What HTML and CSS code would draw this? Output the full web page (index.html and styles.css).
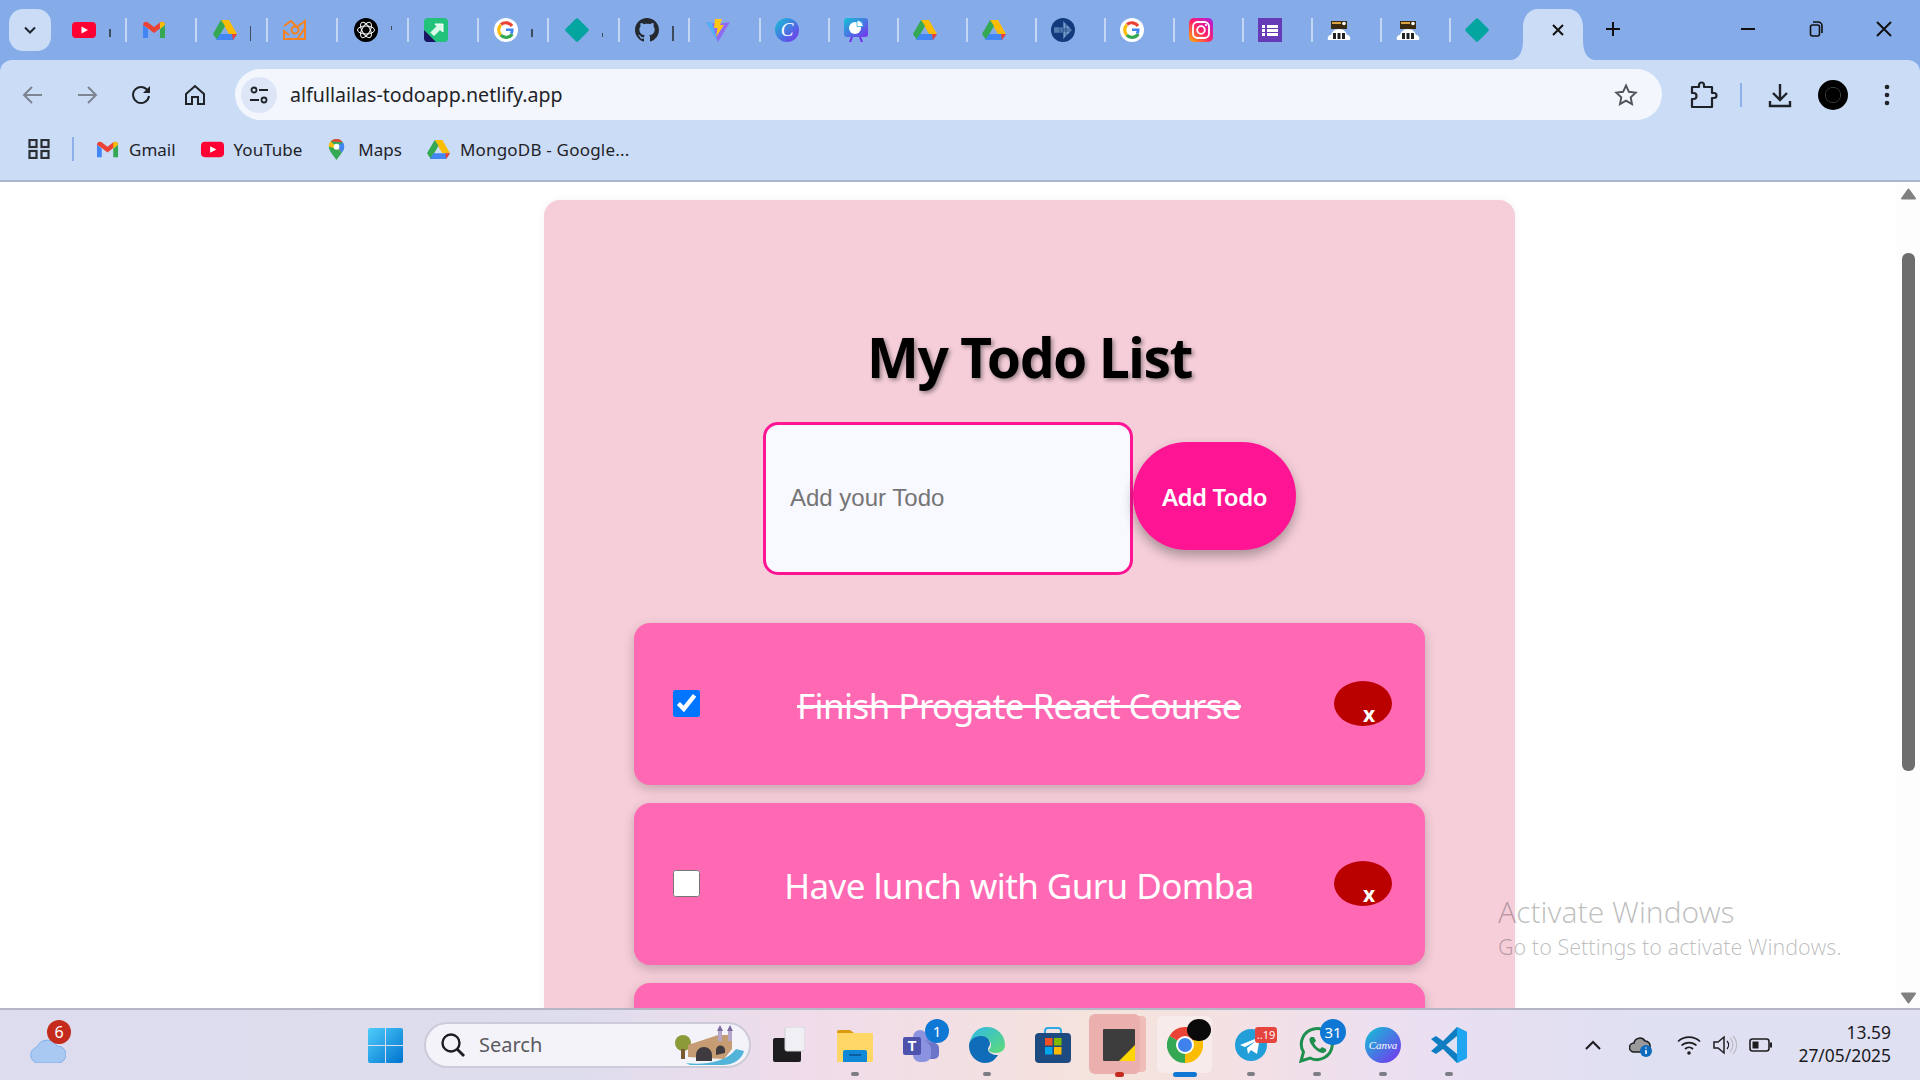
FILE: index.html
```html
<!DOCTYPE html>
<html>
    <head>
        <title>My Todo List</title>
        <link rel="stylesheet" href="styles.css">
    </head>
    <body>
        <svg class="sprite" width="0" height="0">
            <defs>
                <linearGradient id="g-canva" x1="0" y1="0" x2="1" y2="1">
                    <stop offset="0" stop-color="#11c4d4"/>
                    <stop offset="1" stop-color="#7a2ff0"/>
                </linearGradient>
                <linearGradient id="g-insta" x1="0" y1="1" x2="1" y2="0">
                    <stop offset="0" stop-color="#ffb000"/>
                    <stop offset=".5" stop-color="#ff1f6b"/>
                    <stop offset="1" stop-color="#a51fe8"/>
                </linearGradient>
                <linearGradient id="g-win" x1="0" y1="0" x2="1" y2="1">
                    <stop offset="0" stop-color="#4fcdfb"/>
                    <stop offset="1" stop-color="#0073cf"/>
                </linearGradient>
                <linearGradient id="g-edge" x1="0" y1="0" x2="1" y2="1">
                    <stop offset="0" stop-color="#2fb7e8"/>
                    <stop offset="1" stop-color="#5fdc76"/>
                </linearGradient>
                <symbol id="i-youtube" viewBox="0 0 24 24">
                    <rect x="0" y="4" width="24" height="16" rx="4" fill="#ff0033"/>
                    <path d="M9.500 8.500 16 12l-6.500 3.500z" fill="#fff"/>
                </symbol>
                <symbol id="i-gmail" viewBox="0 0 24 24">
                    <path d="M1 7v13h5V11z" fill="#4285f4"/>
                    <path d="M18 11v9h5V7z" fill="#34a853"/>
                    <path d="M1 7c0-3 3-4 5-2.500l6 4.500 6-4.500c2-1.500 5-.5 5 2l-5 4-6 4.500-6-4.500z" fill="#ea4335"/>
                    <path d="M18 4.500c2-1.500 5-.5 5 2.500l-5 4z" fill="#fbbc04"/>
                </symbol>
                <symbol id="i-drive" viewBox="0 0 24 24">
                    <path d="M8 2h8l8 14h-8z" fill="#fbbc04"/>
                    <path d="M8 2 0 16l4 6 8-14z" fill="#34a853"/>
                    <path d="M7 16h17l-4 6H3z" fill="#4285f4"/>
                    <path d="M20 22l4-6h-5z" fill="#ea4335"/>
                </symbol>
                <symbol id="i-google" viewBox="0 0 24 24">
                    <circle cx="12" cy="12" r="12" fill="#fff"/>
                    <path d="M18 8a7.500 7.500 0 0 0-11-1.500" fill="none" stroke="#ea4335" stroke-width="3.200"/>
                    <path d="M6.800 6.800a7.500 7.500 0 0 0 0 10.400" fill="none" stroke="#fbbc04" stroke-width="3.200"/>
                    <path d="M6.800 17.200a7.500 7.500 0 0 0 11.500-1.200" fill="none" stroke="#34a853" stroke-width="3.200"/>
                    <path d="M12 10.500h7.500c.3 2.500-.2 4.500-1.200 5.800l-2.500-1.800c.5-.5.800-1 .9-1.500H12z" fill="#4285f4"/>
                </symbol>
                <symbol id="i-diamond" viewBox="0 0 24 24">
                    <path d="M10.500 1 1 10.500a2 2 0 0 0 0 3L10.500 23a2 2 0 0 0 3 0l9.500-9.500a2 2 0 0 0 0-3L13.500 1a2 2 0 0 0-3 0z" fill="#04a5a0"/>
                </symbol>
                <symbol id="i-dom" viewBox="0 0 24 24">
                    <rect x="4" y="3" width="16" height="8" fill="#3a2a10"/>
                    <rect x="5" y="4" width="9" height="2" fill="#d9a441"/>
                    <circle cx="17" cy="5.500" r="1.800" fill="#fff"/>
                    <path d="M1 22c-1-3 1-5 3-5 1-3 3-6 8-6s7 3 8 6c2 0 4 2 3 5z" fill="#fff"/>
                    <rect x="6" y="15" width="3" height="6" fill="#222"/>
                    <rect x="10.500" y="15" width="3" height="6" fill="#222"/>
                    <rect x="15" y="15" width="3" height="6" fill="#222"/>
                </symbol>
                <symbol id="i-dot" viewBox="0 0 8 4">
                    <rect width="8" height="4" rx="2" fill="#7d7d85"/>
                </symbol>
            </defs>
        </svg>

        <div class="chrome">
            <div class="tabstrip">
                <button class="tab-search">
                    <svg width="16" height="16" viewBox="0 0 16 16"><path d="M3 5.500 8 10.500l5-5" fill="none" stroke="#1f2430" stroke-width="2"/></svg>
                </button>
                <div class="tabs">
                    <div class="tab tab-wide"><svg class="favicon"><use href="#i-youtube"/></svg><span class="sliver"></span></div>
                    <div class="tab tab-wide"><svg class="favicon"><use href="#i-gmail"/></svg></div>
                    <div class="tab tab-wide"><svg class="favicon"><use href="#i-drive"/></svg><span class="sliver sliver-tall"></span></div>
                    <div class="tab tab-wide">
                        <svg class="favicon" viewBox="0 0 24 24"><g fill="none" stroke="#f58220" stroke-width="2"><path d="M1 8 8 3l6 6 8-6v18H9L1 21v-8l5 4"/><circle cx="12" cy="12" r="3.500"/><path d="M22 10l-7 10"/></g></svg>
                    </div>
                    <div class="tab tab-wide">
                        <svg class="favicon" viewBox="0 0 24 24"><circle cx="12" cy="12" r="12" fill="#000"/><g fill="none" stroke="#fff" stroke-width="1"><ellipse cx="12" cy="12" rx="8.500" ry="4"/><ellipse cx="12" cy="12" rx="8.500" ry="4" transform="rotate(60 12 12)"/><ellipse cx="12" cy="12" rx="8.500" ry="4" transform="rotate(120 12 12)"/></g></svg>
                        <span class="sliver sliver-top"></span>
                    </div>
                    <div class="tab tab-wide">
                        <svg class="favicon" viewBox="0 0 24 24"><rect width="24" height="24" rx="4" fill="#22c27a"/><path d="M0 12 12 24H4a4 4 0 0 1-4-4z" fill="#1c1464"/><path d="M11 6h8v8l-3-2.500-6 6-3-3 6-6z" fill="#d8fbe9" stroke="#fff"/></svg>
                    </div>
                    <div class="tab tab-wide"><svg class="favicon"><use href="#i-google"/></svg><span class="sliver"></span></div>
                    <div class="tab tab-wide"><svg class="favicon"><use href="#i-diamond"/></svg><span class="sliver sliver-low"></span></div>
                    <div class="tab tab-wide">
                        <svg class="favicon" viewBox="0 0 16 16"><path fill="#24292f" d="M8 0C3.580 0 0 3.580 0 8c0 3.540 2.290 6.530 5.470 7.590.4.070.55-.17.55-.38 0-.19-.01-.82-.01-1.490-2.010.37-2.530-.49-2.690-.94-.09-.23-.48-.94-.82-1.130-.28-.15-.68-.52-.01-.53.63-.01 1.080.58 1.230.82.72 1.210 1.870.87 2.330.66.07-.52.28-.87.51-1.070-1.780-.2-3.640-.89-3.640-3.950 0-.87.31-1.590.82-2.150-.08-.2-.36-1.020.08-2.120 0 0 .67-.21 2.200.82.64-.18 1.320-.27 2-.27.68 0 1.360.09 2 .27 1.530-1.040 2.200-.82 2.200-.82.44 1.100.16 1.920.08 2.120.51.56.82 1.270.82 2.150 0 3.070-1.870 3.750-3.650 3.950.29.25.54.73.54 1.480 0 1.070-.01 1.930-.01 2.200 0 .21.15.46.55.38A8.013 8.013 0 0 0 16 8c0-4.420-3.580-8-8-8z"/></svg>
                        <span class="sliver sliver-tall"></span>
                    </div>
                    <div class="tab tab-wide">
                        <svg class="favicon" viewBox="0 0 24 24"><path d="M0 4l12 2 12-2-12 20z" fill="#8f6bf5"/><path d="M0 4l6 1 6 19z" fill="#4fb4f5"/><path d="M9 1h7l-2 6h4L10 19l1.500-9H8z" fill="#ffc517"/></svg>
                    </div>
                    <div class="tab">
                        <svg class="favicon" viewBox="0 0 24 24"><circle cx="12" cy="12" r="12" fill="url(#g-canva)"/><text x="12" y="18" class="canva-c">C</text></svg>
                    </div>
                    <div class="tab">
                        <svg class="favicon" viewBox="0 0 24 24"><rect width="24" height="19" rx="3" fill="url(#g-canva)"/><path d="M8 19l-2 5M16 19l2 5" stroke="#6a2fe0" stroke-width="2"/><circle cx="11" cy="10" r="6" fill="#fff"/><path d="M13 2.500h1a6 6 0 0 1 5 5v1h-6z" fill="#fff" stroke="#14a5d8" stroke-width=".7"/></svg>
                    </div>
                    <div class="tab"><svg class="favicon"><use href="#i-drive"/></svg></div>
                    <div class="tab"><svg class="favicon"><use href="#i-drive"/></svg></div>
                    <div class="tab">
                        <svg class="favicon" viewBox="0 0 24 24"><circle cx="12" cy="12" r="12" fill="#133a7c"/><path d="M12 3l9 9-9 9zM3 9.500h12v5H3z" fill="#9cc0e8" opacity=".75"/><path d="M3 11h18M3 13h18M9 6v12M12 4v16M15 6v12" stroke="#133a7c" stroke-width=".7"/></svg>
                    </div>
                    <div class="tab"><svg class="favicon"><use href="#i-google"/></svg></div>
                    <div class="tab">
                        <svg class="favicon" viewBox="0 0 24 24"><rect width="24" height="24" rx="5" fill="url(#g-insta)"/><rect x="4" y="4" width="16" height="16" rx="4.500" fill="none" stroke="#fff" stroke-width="1.800"/><circle cx="12" cy="12" r="3.800" fill="none" stroke="#fff" stroke-width="1.800"/><circle cx="17" cy="7" r="1.100" fill="#fff"/></svg>
                    </div>
                    <div class="tab">
                        <svg class="favicon" viewBox="0 0 24 24"><rect width="24" height="24" fill="#673ab7"/><path d="M9 7h11v3H9zM9 11h11v3H9zM9 15h11v3H9zM4 7h3v3H4zM4 11h3v3H4zM4 15h3v3H4z" fill="#fff"/></svg>
                    </div>
                    <div class="tab"><svg class="favicon"><use href="#i-dom"/></svg></div>
                    <div class="tab"><svg class="favicon"><use href="#i-dom"/></svg></div>
                    <div class="tab tab-last"><svg class="favicon"><use href="#i-diamond"/></svg></div>
                </div>
                <svg class="active-tab" width="86" height="51" viewBox="0 0 86 51">
                    <path d="M0 51c9 0 13-8 13-20V18C13 8 19 0 28 0h30c9 0 15 8 15 18v13c0 12 4 20 13 20z" fill="#cbdcf6"/>
                    <path d="M43 16l10 10M53 16 43 26" stroke="#111" stroke-width="2"/>
                </svg>
                <svg class="new-tab" width="16" height="16" viewBox="0 0 16 16"><path d="M8 1v14M1 8h14" stroke="#111" stroke-width="2"/></svg>
                <div class="window-controls">
                    <svg width="68" height="20" viewBox="0 0 68 20"><path d="M27 10h14" stroke="#111" stroke-width="2"/></svg>
                    <svg width="68" height="20" viewBox="0 0 68 20"><g fill="none" stroke="#111" stroke-width="1.600"><rect x="28.500" y="6" width="9" height="11" rx="2"/><path d="M31 3h5a4 4 0 0 1 4 4v7"/></g></svg>
                    <svg width="68" height="20" viewBox="0 0 68 20"><path d="M27 3l14 14M41 3 27 17" stroke="#111" stroke-width="2"/></svg>
                </div>
            </div>

            <div class="toolbar">
                <span class="tool">
                    <svg width="22" height="22" viewBox="0 0 22 22"><path d="M20 11H3M10 3l-8 8 8 8" fill="none" stroke="#7c8590" stroke-width="2"/></svg>
                </span>
                <span class="tool">
                    <svg width="22" height="22" viewBox="0 0 22 22"><path d="M2 11h17M12 3l8 8-8 8" fill="none" stroke="#7c8590" stroke-width="2"/></svg>
                </span>
                <span class="tool">
                    <svg width="22" height="22" viewBox="0 0 22 22"><path d="M18.500 8A8 8 0 1 0 19 12" fill="none" stroke="#1f2328" stroke-width="2"/><path d="M20 2v7h-7z" fill="#1f2328"/></svg>
                </span>
                <span class="tool">
                    <svg width="22" height="22" viewBox="0 0 22 22"><path d="M2 10 11 2l9 8v10h-6v-7H8v7H2z" fill="none" stroke="#1f2328" stroke-width="2"/></svg>
                </span>
                <div class="omnibox">
                    <span class="site-info">
                        <svg width="20" height="20" viewBox="0 0 20 20"><g fill="none" stroke="#1f2328" stroke-width="1.800"><circle cx="5" cy="5" r="2.500"/><path d="M10 5h9M1 15h9"/><circle cx="15" cy="15" r="2.500"/></g></svg>
                    </span>
                    <span class="url">alfullailas-todoapp.netlify.app</span>
                    <svg class="star" width="24" height="24" viewBox="0 0 24 24"><path d="M12 2.500l2.900 6.300 6.800.8-5 4.700 1.300 6.800-6-3.400-6 3.400 1.300-6.800-5-4.700 6.800-.8z" fill="none" stroke="#50545a" stroke-width="1.900"/></svg>
                </div>
                <svg class="tool-extensions" width="30" height="30" viewBox="0 0 30 30"><path d="M4 7h7V5a2.500 2.500 0 0 1 5 0v2h8v6h2a2.500 2.500 0 0 1 0 5h-2v9H4v-8h1.500a3 3 0 0 0 0-6H4z" fill="none" stroke="#1f2328" stroke-width="2.200" stroke-linejoin="round"/></svg>
                <span class="tool-sep"></span>
                <svg class="tool-download" width="30" height="30" viewBox="0 0 30 30"><path d="M15 4v15M8 13l7 7 7-7M5 21v5h20v-5" fill="none" stroke="#1f2328" stroke-width="2.400"/></svg>
                <span class="avatar"></span>
                <svg class="tool-menu" width="30" height="30" viewBox="0 0 30 30"><circle cx="15" cy="7" r="2.300" fill="#1f2328"/><circle cx="15" cy="15" r="2.300" fill="#1f2328"/><circle cx="15" cy="23" r="2.300" fill="#1f2328"/></svg>
            </div>

            <div class="bookmarks">
                <svg class="apps" width="22" height="20" viewBox="0 0 22 20"><g fill="none" stroke="#2b2f33" stroke-width="2.200"><rect x="1.500" y="1" width="7" height="7"/><rect x="13.500" y="1" width="7" height="7"/><rect x="1.500" y="12" width="7" height="7"/><rect x="13.500" y="12" width="7" height="7"/></g></svg>
                <span class="bookmark-sep"></span>
                <span class="bookmark bookmark-gmail"><svg class="bookmark-icon"><use href="#i-gmail"/></svg>Gmail</span>
                <span class="bookmark bookmark-youtube"><svg class="bookmark-icon"><use href="#i-youtube"/></svg>YouTube</span>
                <span class="bookmark bookmark-maps">
                    <svg class="bookmark-icon" viewBox="0 0 24 24"><path d="M12 23C8 17 4 13 4 9a8 8 0 0 1 16 0c0 4-4 8-8 14z" fill="#34a853"/><path d="M6 3.500 17.500 15 12 11 4 9a8 8 0 0 1 2-5.500z" fill="#fbbc04"/><path d="M12 1a8 8 0 0 1 6.500 3.500L6 3.500A8 8 0 0 1 12 1z" fill="#ea4335"/><path d="M18.500 4.500A8 8 0 0 1 17.500 15L12 9z" fill="#4285f4"/><circle cx="12" cy="9" r="3" fill="#fff"/></svg>
                    Maps
                </span>
                <span class="bookmark bookmark-drive"><svg class="bookmark-icon"><use href="#i-drive"/></svg>MongoDB - Google...</span>
            </div>
        </div>

        <div class="viewport">
            <div class="page">
                <div class="card">
                    <h1 class="title">My Todo List</h1>
                    <form class="todo-form">
                        <input class="todo-input" type="text" placeholder="Add your Todo">
                        <button class="add-btn" type="button">Add Todo</button>
                    </form>
                    <div class="todo-list">
                        <div class="todo-item">
                            <input class="todo-check" type="checkbox" checked>
                            <span class="todo-text done">Finish Progate React Course</span>
                            <button class="delete-btn" type="button">x</button>
                        </div>
                        <div class="todo-item">
                            <input class="todo-check" type="checkbox">
                            <span class="todo-text">Have lunch with Guru Domba</span>
                            <button class="delete-btn" type="button">x</button>
                        </div>
                        <div class="todo-item"></div>
                    </div>
                </div>
            </div>
            <div class="scrollbar">
                <svg class="arrow-up" width="15" height="12" viewBox="0 0 15 12"><path d="M7.500 1.500 14 10.500H1z" fill="#808080" stroke="#808080" stroke-width="2" stroke-linejoin="round"/></svg>
                <div class="thumb"></div>
                <svg class="arrow-down" width="15" height="12" viewBox="0 0 15 12"><path d="M7.500 10.500 14 1.500H1z" fill="#808080" stroke="#808080" stroke-width="2" stroke-linejoin="round"/></svg>
            </div>
            <div class="activate">
                <div class="activate-title">Activate Windows</div>
                <div class="activate-sub">Go to Settings to activate Windows.</div>
            </div>
        </div>

        <div class="taskbar">
            <div class="weather">
                <svg class="weather-sun" width="10" height="10" viewBox="0 0 10 10"><circle cx="5" cy="5" r="5" fill="#f08a24"/></svg>
                <svg class="weather-cloud" width="36" height="24" viewBox="0 0 36 24"><path d="M8 24a8 8 0 0 1-1-15.800A11 11 0 0 1 27 7a8.500 8.500 0 0 1 1 17z" fill="#a9c8f2" stroke="#7fb0ea"/></svg>
                <span class="weather-badge">6</span>
            </div>
            <svg class="win-logo" width="35" height="35" viewBox="0 0 35 35"><path d="M0 2a2 2 0 0 1 2-2h15v17H0zM18 0h15a2 2 0 0 1 2 2v15H18zM0 18h17v17H2a2 2 0 0 1-2-2zM18 18h17v15a2 2 0 0 1-2 2H18z" fill="url(#g-win)"/></svg>
            <div class="search">
                <svg width="26" height="26" viewBox="0 0 26 26"><circle cx="11" cy="11" r="8.500" fill="none" stroke="#1d1d1f" stroke-width="2.400"/><path d="M17 17l7 7" stroke="#1d1d1f" stroke-width="2.800"/></svg>
                <span class="search-text">Search</span>
                <svg class="search-art" width="74" height="40" viewBox="0 0 74 40">
                    <circle cx="9" cy="18" r="8" fill="#8c9a3a"/><rect x="7" y="24" width="4" height="10" fill="#7a5a35"/>
                    <path d="M14 32V20l30-10 14 0v14l-8 10z" fill="#c59c74"/>
                    <path d="M22 36V30a8 8 0 0 1 16 0v6zM42 30v-5a4 4 0 0 1 9 0v3z" fill="#3f3a3d"/>
                    <rect x="44" y="6" width="4" height="10" fill="#b8a6c8"/><rect x="54" y="6" width="4" height="10" fill="#b8a6c8"/>
                    <path d="M46 0l3 6h-6zM56 0l3 6h-6z" fill="#7a6aa0"/>
                    <path d="M12 38c16 2 40 0 50-14l8 2c-2 8-10 14-22 14H16z" fill="#52b4d8"/>
                </svg>
            </div>
            <div class="apps-row">
                <div class="slot">
                    <svg width="32" height="36" viewBox="0 0 32 36"><rect x="0" y="11" width="28" height="24" rx="2" fill="#1d1d1f"/><rect x="12" y="0" width="20" height="24" rx="2" fill="#f0f0f4" stroke="#d0d0d6"/></svg>
                </div>
                <div class="slot">
                    <svg width="36" height="34" viewBox="0 0 36 34"><path d="M0 4a2 2 0 0 1 2-2h11l4 3h-17z" fill="#d99a10"/><rect y="5" width="36" height="29" rx="1" fill="#ffd767"/><path d="M6 34V24a2 2 0 0 1 2-2h20a2 2 0 0 1 2 2v10z" fill="#0f88d8"/><rect x="12" y="26" width="12" height="2" fill="#0a5ea0"/></svg>
                    <svg class="slot-dot" width="8" height="4"><use href="#i-dot"/></svg>
                </div>
                <div class="slot">
                    <svg width="36" height="34" viewBox="0 0 36 34"><circle cx="26" cy="13" r="7" fill="#7b83d4"/><rect x="20" y="15" width="16" height="16" rx="5" fill="#6d75c8"/><circle cx="17" cy="9" r="7" fill="#8b93e0"/><rect x="10" y="14" width="18" height="20" rx="7" fill="#8b93e0"/><rect y="9" width="18" height="18" rx="2" fill="#4d53ad"/><text x="9" y="23" class="teams-t">T</text></svg>
                    <span class="badge badge-blue">1</span>
                </div>
                <div class="slot">
                    <svg width="36" height="36" viewBox="0 0 36 36"><path d="M18 0a18 18 0 0 1 18 18c0 5-4 8-9 8-4 0-7-1-7-3 0-1 2-2 2-5 0-5-5-8-9-8-6 0-11 4-13 9C1 8 8 0 18 0z" fill="url(#g-edge)"/><path d="M0 19c0-6 6-10 12-10 5 0 9 3 9 8 0 2-2 3-2 5 0 4 5 6 10 6-3 5-7 8-13 8C8 36 0 29 0 19z" fill="#0f6cb8"/></svg>
                    <svg class="slot-dot" width="8" height="4"><use href="#i-dot"/></svg>
                </div>
                <div class="slot">
                    <svg width="36" height="36" viewBox="0 0 36 36"><path d="M10 8V4a3 3 0 0 1 3-3h10a3 3 0 0 1 3 3v4" fill="none" stroke="#2ea8e6" stroke-width="2"/><rect y="6" width="36" height="30" rx="4" fill="#1d4a80"/><rect x="10" y="11" width="7.500" height="7.500" fill="#f25022"/><rect x="19" y="11" width="7.500" height="7.500" fill="#7fba00"/><rect x="10" y="20" width="7.500" height="7.500" fill="#00a4ef"/><rect x="19" y="20" width="7.500" height="7.500" fill="#ffb900"/></svg>
                </div>
                <div class="slot">
                    <span class="tile tile-sticky"></span>
                    <svg class="slot-icon" width="32" height="32" viewBox="0 0 32 32"><rect width="32" height="32" rx="1" fill="#3d3d3d"/><path d="M32 16v16H16z" fill="#ffd500"/></svg>
                    <span class="slot-mark slot-mark-red"></span>
                </div>
                <div class="slot">
                    <span class="tile tile-chrome"></span>
                    <svg class="slot-icon" width="36" height="36" viewBox="0 0 36 36"><path d="M18 18 2.400 9A18 18 0 0 1 33.600 9z" fill="#ea4335"/><path d="M18 18 2.400 9A18 18 0 0 0 18 36z" fill="#34a853"/><path d="M18 18 33.600 9A18 18 0 0 1 18 36z" fill="#fbbc04"/><circle cx="18" cy="18" r="9" fill="#fff"/><circle cx="18" cy="18" r="7" fill="#3f82ee"/></svg>
                    <span class="chrome-avatar"></span>
                    <span class="slot-mark slot-mark-blue"></span>
                </div>
                <div class="slot">
                    <svg width="32" height="32" viewBox="0 0 32 32"><circle cx="16" cy="16" r="16" fill="#229ed9"/><path d="M5 16 25 8l-3 17-6-4-3 4-1-6 9-7-11 6z" fill="#fff"/></svg>
                    <span class="badge-red">..19</span>
                    <svg class="slot-dot" width="8" height="4"><use href="#i-dot"/></svg>
                </div>
                <div class="slot">
                    <svg width="36" height="36" viewBox="0 0 36 36"><path d="M2 34l2.500-9A15.500 15.500 0 1 1 11 31z" fill="none" stroke="#1f8f4f" stroke-width="3"/><path d="M12 10c-2 1-2 4 0 7 3 5 7 8 11 9 3 0 5-2 4-4l-4-2-2 2c-3-1-5-4-6-6l2-2-2-4z" fill="#1f8f4f"/></svg>
                    <span class="badge badge-blue badge-wide">31</span>
                    <svg class="slot-dot" width="8" height="4"><use href="#i-dot"/></svg>
                </div>
                <div class="slot">
                    <svg width="36" height="36" viewBox="0 0 36 36"><circle cx="18" cy="18" r="18" fill="url(#g-canva)"/><text x="18" y="22" class="canva-word">Canva</text></svg>
                    <svg class="slot-dot" width="8" height="4"><use href="#i-dot"/></svg>
                </div>
                <div class="slot">
                    <svg width="36" height="36" viewBox="0 0 36 36"><path d="M26 0 36 5v26l-10 5-14-14-7 5-5-3 7-6-7-6 5-3 7 5z" fill="#0f7dc2"/><path d="M26 0 36 5v26l-10 5z" fill="#20a5f0"/><path d="M26 9 15 18l11 9z" fill="#dfe0f2"/></svg>
                    <svg class="slot-dot" width="8" height="4"><use href="#i-dot"/></svg>
                </div>
            </div>
            <div class="tray">
                <svg width="24" height="24" viewBox="0 0 24 24"><path d="M5 16l7-7 7 7" fill="none" stroke="#1d1d1f" stroke-width="2"/></svg>
                <svg class="tray-wide" width="24" height="24" viewBox="0 0 24 24"><path d="M5 19a4.500 4.500 0 0 1 0-9 6 6 0 0 1 11-2 5 5 0 0 1 5 6v5z" fill="#9a9a9c" stroke="#1d1d1f" stroke-width="1.500"/><circle cx="17" cy="18" r="6" fill="#0f6cbd"/><path d="M17 14.500v1M17 17v4" stroke="#fff" stroke-width="1.600"/></svg>
                <svg class="tray-wide" width="24" height="24" viewBox="0 0 24 24"><g fill="none" stroke="#1d1d1f" stroke-width="1.700"><path d="M1 8.500a16 16 0 0 1 22 0M4.500 12.500a11 11 0 0 1 15 0M8 16a6 6 0 0 1 8 0"/></g><circle cx="12" cy="20" r="1.800" fill="#1d1d1f"/></svg>
                <svg width="24" height="24" viewBox="0 0 24 24"><path d="M1 9h4l6-5v16l-6-5H1z" fill="none" stroke="#1d1d1f" stroke-width="1.500"/><path d="M14 8a6 6 0 0 1 0 8" fill="none" stroke="#1d1d1f" stroke-width="1.300"/><path d="M17 5a10 10 0 0 1 0 14M20 3a13 13 0 0 1 0 18" fill="none" stroke="#bcbcc4" stroke-width="1.300"/></svg>
                <svg width="24" height="24" viewBox="0 0 24 24"><rect x="1" y="6" width="19" height="12" rx="2.500" fill="none" stroke="#1d1d1f" stroke-width="1.600"/><rect x="3.500" y="8.500" width="6" height="7" fill="#1d1d1f"/><path d="M21 9.500h2v5h-2z" fill="#1d1d1f"/></svg>
            </div>
            <div class="clock">
                <div>13.59</div>
                <div>27/05/2025</div>
            </div>
        </div>
    </body>
</html>
```

FILE: styles.css
```css
* {
    box-sizing: border-box;
}
html,
body {
    margin: 0;
    height: 100%;
}
body {
    display: flex;
    flex-direction: column;
    overflow: hidden;
    background: white;
    font-family: "Noto Sans", "Open Sans", sans-serif;
}
svg {
    flex: none;
    display: block;
}
.sprite {
    height: 0;
}

/* browser chrome */
.chrome {
    height: 182px;
    flex: none;
    background: #85ace9;
}
.tabstrip {
    height: 60px;
    display: flex;
    align-items: flex-start;
    padding: 9px 0 0 9px;
}
.tab-search {
    width: 42px;
    height: 42px;
    padding: 0;
    border: 0;
    border-radius: 14px;
    background: #cbdcf6;
    display: flex;
    align-items: center;
    justify-content: center;
}
.tabs {
    display: flex;
    margin: 9px 0 0 5.6px;
}
.tab {
    width: 69.1px;
    height: 24px;
    padding-left: 14px;
    display: flex;
    border-right: 2.5px solid #c4d6f3;
}
.tab-wide {
    width: 70.4px;
    padding-left: 15.5px;
}
.tab-last {
    width: 58.7px;
    border-right: 0;
}
.favicon {
    width: 24px;
    height: 24px;
}
.sliver {
    width: 1.5px;
    height: 8px;
    margin: 11px 0 0 13px;
    background: #3f4a5c;
}
.sliver-tall {
    height: 15px;
    margin-top: 8px;
}
.sliver-top {
    height: 4px;
    margin-top: 8px;
}
.sliver-low {
    height: 4px;
    margin-top: 15px;
}
.new-tab {
    margin: 12px 0 0 9px;
}
.window-controls {
    margin: 10px 0 0 auto;
    display: flex;
    width: 206px;
}

.toolbar {
    height: 66px;
    padding: 3px 0 0 6px;
    display: flex;
    align-items: center;
    background: #cbdcf6;
    border-radius: 12px 12px 0 0;
}
.tool {
    width: 54px;
    display: flex;
    justify-content: center;
}
.omnibox {
    width: 1427px;
    height: 51px;
    margin-left: 13px;
    padding: 0 24px 0 6px;
    display: flex;
    align-items: center;
    background: #f3f7fd;
    border-radius: 26px;
}
.site-info {
    width: 36px;
    height: 36px;
    border-radius: 50%;
    background: #dce6f7;
    display: flex;
    align-items: center;
    justify-content: center;
}
.url {
    margin-left: 13px;
    font-size: 19.6px;
    color: #1f2328;
}
.star {
    margin-left: auto;
}
.tool-extensions {
    margin-left: 26px;
}
.tool-sep {
    width: 2px;
    height: 24px;
    margin-left: 22px;
    background: #8db0e8;
}
.tool-download {
    margin-left: 23px;
}
.avatar {
    width: 30px;
    height: 30px;
    margin-left: 23px;
    border-radius: 50%;
    background: radial-gradient(circle, #000 7px, #3c3c3c 7.5px, #000 8.5px);
}
.tool-menu {
    margin-left: 24px;
}

.bookmarks {
    height: 56px;
    padding: 0 0 8px 28px;
    display: flex;
    align-items: center;
    background: #cbdcf6;
    border-bottom: 2px solid #a9b6cc;
}
.bookmark-sep {
    width: 2px;
    height: 24px;
    margin-left: 22px;
    background: #8db0e8;
}
.bookmark {
    display: flex;
    align-items: center;
    gap: 10px;
    font-size: 17px;
    color: #1f2328;
}
.bookmark-gmail {
    margin-left: 22px;
}
.bookmark-youtube {
    margin-left: 25px;
}
.bookmark-maps {
    margin-left: 23px;
}
.bookmark-drive {
    margin-left: 25px;
    letter-spacing: 0.2px;
}
.bookmark-icon {
    width: 23px;
    height: 23px;
}

/* page */
.viewport {
    flex: 1;
    min-height: 0;
    display: flex;
    position: relative;
}
.page {
    flex: 1;
    overflow: hidden;
    padding: 18px 0 0 544px;
}
.card {
    width: 971px;
    height: 1100px;
    padding: 0 90px;
    background: #f5ced9;
    border-radius: 16px;
    box-shadow: 0 0 8px rgba(0, 0, 0, 0.05);
}
.title {
    margin: 0;
    padding-top: 119px;
    height: 222px;
    text-align: center;
    font-size: 55px;
    line-height: 76px;
    font-weight: 700;
    letter-spacing: -1.4px;
    color: #000;
    text-shadow: 2px 2px 4px rgba(0, 0, 0, 0.4);
}
.todo-form {
    display: flex;
    align-items: center;
    justify-content: center;
}
.todo-input {
    width: 370px;
    height: 153px;
    padding: 0 24px 2px;
    border: 3px solid #ff1493;
    border-radius: 15px;
    background: #f8f8ff;
    font-family: "Liberation Sans", sans-serif;
    font-size: 24px;
}
.add-btn {
    width: 163px;
    height: 108px;
    margin-bottom: 6px;
    padding: 2px 0 0;
    border: 0;
    border-radius: 54px;
    background: #ff1493;
    color: white;
    font-family: inherit;
    font-size: 24px;
    font-weight: 600;
    letter-spacing: -0.5px;
    box-shadow: 0 6px 12px rgba(0, 0, 0, 0.3);
}
.todo-list {
    margin-top: 48px;
    display: flex;
    flex-direction: column;
    gap: 18px;
}
.todo-item {
    height: 162px;
    flex: none;
    padding: 0 33px 2px 39px;
    display: flex;
    align-items: center;
    background: #ff69b4;
    border-radius: 16px;
    box-shadow: 0 4px 12px rgba(0, 0, 0, 0.2);
}
.todo-check {
    width: 27px;
    height: 27px;
    margin: 0;
    flex: none;
}
.todo-text {
    flex: 1;
    margin-top: 4px;
    padding-left: 4px;
    text-align: center;
    font-size: 35px;
    font-weight: 400;
    letter-spacing: -0.58px;
    color: white;
}
.done {
    text-decoration: line-through;
}
.delete-btn {
    width: 58px;
    height: 45px;
    padding: 22px 0 0 12px;
    border: 0;
    border-radius: 50%;
    background: #bb0000;
    color: white;
    font-family: inherit;
    font-size: 21px;
    font-weight: 700;
    line-height: 20px;
}

.scrollbar {
    width: 23px;
    flex: none;
    display: flex;
    flex-direction: column;
    align-items: center;
    background: #fdfdfd;
}
.arrow-up {
    margin-top: 6px;
}
.thumb {
    width: 13px;
    height: 518px;
    margin-top: 53px;
    border-radius: 6px;
    background: #6e6e6e;
}
.arrow-down {
    margin-top: auto;
    margin-bottom: 4px;
}
.activate {
    position: absolute;
    left: 1498px;
    top: 711px;
    color: rgba(0, 0, 0, 0.26);
    pointer-events: none;
}
.activate-title {
    font-size: 29.9px;
    font-weight: 300;
    line-height: 38px;
}
.activate-sub {
    font-size: 21.5px;
    font-weight: 300;
    line-height: 31px;
}

/* taskbar */
.taskbar {
    height: 72px;
    flex: none;
    display: flex;
    align-items: center;
    padding: 0 29px 0 30px;
    border-top: 2px solid #b5b5c5;
    background: linear-gradient(90deg, #dcdcee 0%, #dedded 30%, #f0dcea 42%, #f5e3dc 58%, #f2e0e6 66%, #ecdff0 72%, #dfe0f2 85%, #dfe0f2 100%);
}
.weather {
    width: 36px;
    height: 24px;
    margin-top: 12px;
    position: relative;
}
.weather-sun {
    position: absolute;
    left: 25px;
    top: -5px;
}
.weather-cloud {
    position: relative;
}
.weather-badge {
    position: absolute;
    left: 17px;
    top: -19px;
    width: 24px;
    height: 24px;
    border-radius: 50%;
    background: #c42b1c;
    color: white;
    font-size: 16px;
    line-height: 24px;
    text-align: center;
}
.win-logo {
    margin-left: 302px;
}
.search {
    width: 327px;
    height: 46px;
    margin-left: 21px;
    padding-left: 14px;
    display: flex;
    align-items: center;
    position: relative;
    background: #f5f3fa;
    border: 2px solid #cdcad9;
    border-radius: 23px;
}
.search-text {
    margin: 0 0 2px 13px;
    font-size: 20px;
    color: #5a5a5e;
}
.search-art {
    margin-left: auto;
    margin-right: 1px;
}
.apps-row {
    margin-left: 5px;
    display: flex;
}
.slot {
    width: 66px;
    height: 70px;
    display: flex;
    align-items: center;
    justify-content: center;
    position: relative;
}
.slot-dot {
    position: absolute;
    left: 29px;
    bottom: 4px;
}
.slot-icon {
    position: relative;
}
.tile {
    position: absolute;
    border-radius: 6px;
}
.tile-sticky {
    left: 3px;
    top: 4px;
    width: 51px;
    height: 60px;
    background: #ebb0ae;
    box-shadow: 8px 0 0 -2px #efbcb8;
}
.tile-chrome {
    left: 5px;
    top: 6px;
    width: 55px;
    height: 57px;
    background: #f8eceb;
}
.slot-mark {
    position: absolute;
    bottom: 3px;
    height: 5px;
    border-radius: 3px;
}
.slot-mark-red {
    left: 29px;
    width: 9px;
    background: #c42b1c;
}
.slot-mark-blue {
    left: 21px;
    width: 24px;
    background: #0f78d4;
}
.chrome-avatar {
    position: absolute;
    left: 35px;
    top: 9px;
    width: 24px;
    height: 22px;
    border-radius: 50%;
    background: #0a0a0a;
}
.badge {
    position: absolute;
    left: 37px;
    top: 9px;
    width: 24px;
    height: 24px;
    border-radius: 50%;
    background: #0f78d4;
    color: white;
    font-size: 15px;
    line-height: 24px;
    text-align: center;
}
.badge-wide {
    left: 36px;
    width: 26px;
    height: 26px;
    line-height: 26px;
}
.badge-red {
    position: absolute;
    left: 37px;
    top: 17px;
    width: 22px;
    height: 16px;
    border-radius: 3px;
    background: #e5443f;
    color: white;
    font-size: 11px;
    line-height: 16px;
    text-align: center;
}
.tray {
    margin-left: 99px;
    display: flex;
    gap: 12px;
}
.tray-wide {
    margin-left: 12px;
}
.clock {
    margin: 0 0 2px auto;
    text-align: right;
    font-size: 17.4px;
    line-height: 23.5px;
    color: #1b1b1f;
}
.canva-c {
    font-family: "Liberation Serif", serif;
    font-style: italic;
    font-size: 19px;
    fill: white;
    text-anchor: middle;
}
.canva-word {
    font-family: "Liberation Serif", serif;
    font-style: italic;
    font-size: 11px;
    fill: white;
    text-anchor: middle;
}
.teams-t {
    font-family: "Liberation Sans", sans-serif;
    font-size: 14px;
    font-weight: 700;
    fill: white;
    text-anchor: middle;
}
```
